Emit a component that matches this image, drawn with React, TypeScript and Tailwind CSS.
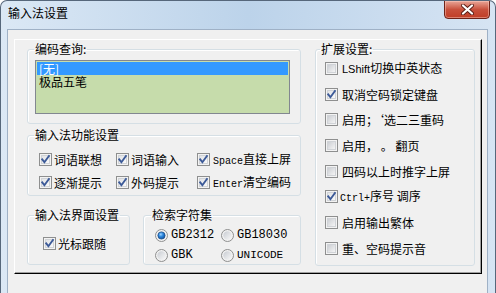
import React from "react";

const cjk = "font-['Noto_Sans_CJK_SC','Noto_Sans',sans-serif]";
const mono = "font-['Liberation_Mono',monospace]";

const CheckBox: React.FC<{ checked?: boolean }> = ({ checked }) => (
  <svg width="13" height="13" viewBox="0 0 13 13" className="shrink-0">
    <defs>
      <linearGradient id="cbInner" x1="0" y1="0" x2="1" y2="1">
        <stop offset="0" stopColor="#c9ccd1" />
        <stop offset="1" stopColor="#f7f7f7" />
      </linearGradient>
      <linearGradient id="cbInnerOn" x1="0" y1="0" x2="1" y2="1">
        <stop offset="0" stopColor="#dfe1e4" />
        <stop offset="1" stopColor="#fbfbfb" />
      </linearGradient>
    </defs>
    <rect x="0.5" y="0.5" width="12" height="12" fill="#f3f3f3" stroke="#8e8f8f" />
    <rect
      x="2.5"
      y="2.5"
      width="8"
      height="8"
      fill={checked ? "url(#cbInnerOn)" : "url(#cbInner)"}
      stroke="#d0d3d7"
    />
    {checked && (
      <path
        d="M3.2 6.4 5.4 9.2 9.9 3"
        fill="none"
        stroke="#3c5a98"
        strokeWidth="1.9"
        strokeLinecap="square"
      />
    )}
  </svg>
);

const Radio: React.FC<{ checked?: boolean }> = ({ checked }) => (
  <svg width="13" height="13" viewBox="0 0 13 13" className="shrink-0">
    <defs>
      <linearGradient id="rbInner" x1="0" y1="0" x2="1" y2="1">
        <stop offset="0" stopColor="#c8ccd2" />
        <stop offset="1" stopColor="#f8f8f8" />
      </linearGradient>
      <radialGradient id="rbDot" cx="0.4" cy="0.35" r="0.7">
        <stop offset="0" stopColor="#9fd3ff" />
        <stop offset="0.45" stopColor="#2a86dd" />
        <stop offset="1" stopColor="#0f4c95" />
      </radialGradient>
    </defs>
    <circle cx="6.5" cy="6.5" r="6" fill="#f1f1f1" stroke="#8e8f8f" />
    <circle cx="6.5" cy="6.5" r="4.2" fill="url(#rbInner)" />
    {checked && (
      <circle cx="6.5" cy="6.5" r="3.6" fill="url(#rbDot)" stroke="#1a4a86" strokeWidth="0.7" />
    )}
  </svg>
);

const Check: React.FC<{ checked?: boolean; gap?: string; children: React.ReactNode }> = ({
  checked,
  gap = "gap-[2px]",
  children,
}) => (
  <div className={`flex items-center h-[13px] ${gap} whitespace-nowrap`}>
    <CheckBox checked={checked} />
    <span className="text-[12px] leading-[13px] text-black">{children}</span>
  </div>
);

const Option: React.FC<{ checked?: boolean; children: React.ReactNode }> = ({ checked, children }) => (
  <div className="flex items-center h-[13px] gap-[3px] whitespace-nowrap">
    <Radio checked={checked} />
    <span className={`${mono} text-[12px] leading-[13px] text-black`}>{children}</span>
  </div>
);

const Group: React.FC<{ title: string; offset: string; className: string; children: React.ReactNode }> = ({
  title,
  offset,
  className,
  children,
}) => (
  <fieldset
    className={`border border-[#d5dfe5] rounded-[3px] shadow-[inset_1px_1px_0_#ffffff] ${className}`}
  >
    <legend className={`${offset} px-[1px] text-[12px] leading-[14px] text-black`}>{title}</legend>
    {children}
  </fieldset>
);

export default function App() {
  return (
    <div
      className={`${cjk} w-[496px] h-[293px] overflow-hidden flex flex-col rounded-t-[7px] border border-b-0 border-[#56677b] bg-gradient-to-r from-[#dbe8f5] via-[#bcd3ea] to-[#d6e4f3]`}
    >
      {/* title bar */}
      <div className="relative h-[28px] shrink-0">
        <div className="pt-[5px] pl-[7px] text-[12px] leading-[14px] text-black">输入法设置</div>
        <button className="absolute top-[-1px] right-[5px] w-[46px] h-[19px] rounded-b-[4px] border border-[#6e2319] bg-gradient-to-b from-[#e8a598] via-[#c8503c] to-[#c03d26] shadow-[inset_0_0_0_1px_rgba(255,210,200,0.45)] flex items-center justify-center">
          <svg width="13" height="11" viewBox="0 0 13 11">
            <path d="M2 1.5 11 9.5M11 1.5 2 9.5" stroke="#5b1f18" strokeWidth="4" strokeLinecap="round" />
            <path d="M2 1.5 11 9.5M11 1.5 2 9.5" stroke="#ffffff" strokeWidth="2.2" strokeLinecap="round" />
          </svg>
        </button>
      </div>

      {/* client area */}
      <div className="ml-[6px] w-[481px] flex-1 bg-[#f0f0f0] border-t border-x border-[#9fb1c6] pt-[9px] pl-[6px]">
        <div className="w-[468px] h-[235px] border border-t-white border-l-white border-r-black border-b-black shadow-[inset_-1px_-1px_0_#a0a0a0] flex gap-[14px] pt-[2px] pl-[12px]">
          {/* left column */}
          <div className="w-[274px] flex flex-col">
            <Group title="编码查询:" offset="ml-[6px]" className="h-[82px]">
              <div className="ml-[7px] mt-[4px] w-[255px] h-[54px] border border-[#828790] bg-[#c6dcab] pt-[1px] px-[1px]">
                <div className="h-[13px] bg-[#3399ff] text-white text-[12px] leading-[13px] pl-[2px]">[无]</div>
                <div className="h-[14px] text-black text-[12px] leading-[14px] pl-[2px]">极品五笔</div>
              </div>
            </Group>

            <Group title="输入法功能设置" offset="ml-[6px]" className="mt-[4px] h-[68px]">
              <div className="mt-[11px] pl-[11px] grid grid-cols-[77px_81px_1fr] gap-y-[10px]">
                <Check checked>词语联想</Check>
                <Check checked>词语输入</Check>
                <Check checked gap="gap-[3px]">
                  <span className={`${mono} text-[10px]`}>Space</span>直接上屏
                </Check>
                <Check checked>逐渐提示</Check>
                <Check checked>外码提示</Check>
                <Check checked gap="gap-[3px]">
                  <span className={`${mono} text-[10px]`}>Enter</span>清空编码
                </Check>
              </div>
            </Group>

            <div className="mt-[12px] flex gap-[13px]">
              <Group title="输入法界面设置" offset="ml-[6px]" className="w-[103px] h-[57px]">
                <div className="mt-[15px] pl-[15px]">
                  <Check checked>光标跟随</Check>
                </div>
              </Group>
              <Group title="检索字符集" offset="ml-[7px]" className="w-[158px] h-[57px]">
                <div className="mt-[7px] pl-[11px] grid grid-cols-[66px_1fr] gap-y-[7px]">
                  <Option checked>GB2312</Option>
                  <Option>GB18030</Option>
                  <Option>GBK</Option>
                  <Option>
                    <span className="text-[11px]">UNICODE</span>
                  </Option>
                </div>
              </Group>
            </div>
          </div>

          {/* right column */}
          <Group title="扩展设置:" offset="ml-[4px]" className="w-[160px] h-[224px]">
            <div className="mt-[6px] pl-[9px] flex flex-col gap-[12.7px]">
              <Check gap="gap-[4px]">
                <span className="font-['Liberation_Sans',sans-serif] text-[11px]">LShift</span>切换中英状态
              </Check>
              <Check checked gap="gap-[4px]">取消空码锁定键盘</Check>
              <Check gap="gap-[4px]">启用；‘选二三重码</Check>
              <Check gap="gap-[4px]">启用， 。 翻页</Check>
              <Check gap="gap-[4px]">四码以上时推字上屏</Check>
              <Check checked gap="gap-[2px]">
                <span className={`${mono} text-[10px]`}>Ctrl+</span>序号 调序
              </Check>
              <Check gap="gap-[4px]">启用输出繁体</Check>
              <Check gap="gap-[4px]">重、空码提示音</Check>
            </div>
          </Group>
        </div>
      </div>
    </div>
  );
}
